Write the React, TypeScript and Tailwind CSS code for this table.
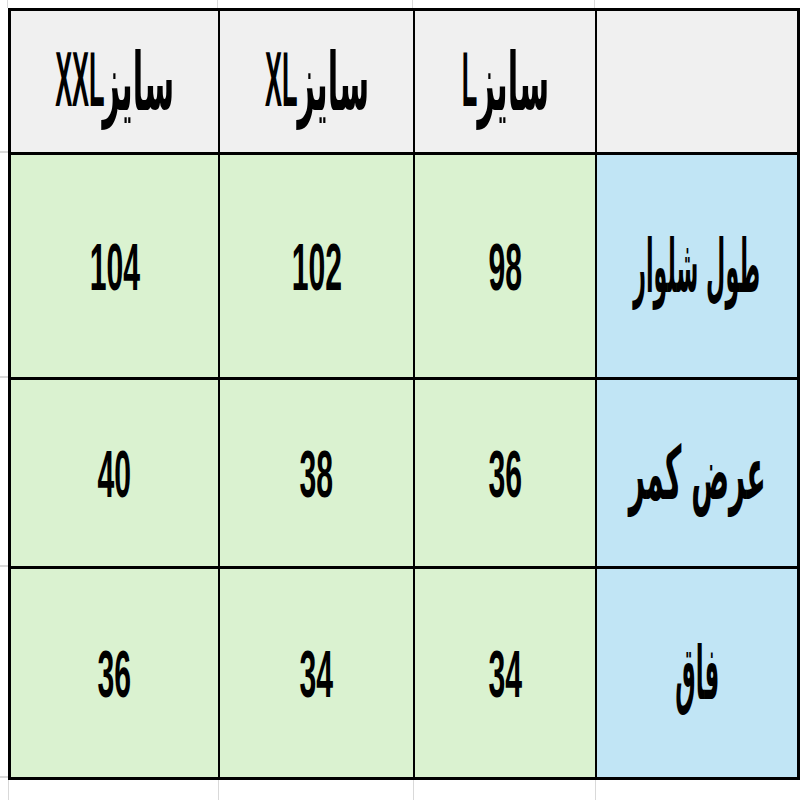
import React from "react";

const latin = "font-['Liberation_Sans',Arial,sans-serif] font-bold text-black leading-none";
const arabic = "font-['DejaVu_Sans','Noto_Sans',sans-serif] font-bold text-black leading-none";

function Num({ v }: { v: string }) {
  return (
    <span className={`${latin} inline-block text-[67px] scale-x-[0.45]`}>{v}</span>
  );
}

function HeadCell({ s, w }: { s: string; w: number }) {
  return (
    <div className="bg-[#f0f0f0] flex items-center justify-center">
      <div className="flex items-center">
        <div className="flex justify-center shrink-0" style={{ width: w }}>
          <span className={`${latin} shrink-0 whitespace-nowrap inline-block text-[77px] scale-x-[0.33] translate-y-[-2px]`}>
            {s}
          </span>
        </div>
        <div className="flex justify-center shrink-0 w-[70px]">
          <span dir="rtl" className={`${arabic} shrink-0 whitespace-nowrap inline-block text-[80px] scale-x-[0.38] translate-y-[1px]`}>
            سایز
          </span>
        </div>
      </div>
    </div>
  );
}

function Label({ t, w, sx }: { t: string; w: number; sx: string }) {
  return (
    <div className="bg-[#c1e5f5] flex items-center justify-center">
      <div className="flex justify-center shrink-0" style={{ width: w }}>
        <span dir="rtl" className={`${arabic} shrink-0 inline-block whitespace-nowrap text-[74px] ${sx}`}>{t}</span>
      </div>
    </div>
  );
}

function G({ v }: { v: string }) {
  return (
    <div className="bg-[#daf2d0] flex items-center justify-center">
      <Num v={v} />
    </div>
  );
}

export default function App() {
  return (
    <div className="w-[800px] h-[800px] bg-white relative overflow-hidden">
      <div className="h-[8px] grid grid-cols-[8px_210px_195px_182px_205px]">
        <div className="border-r border-[#d9d9d9]" />
        <div className="border-r border-[#d9d9d9]" />
        <div className="border-r border-[#d9d9d9]" />
        <div className="border-r border-[#d9d9d9]" />
        <div />
      </div>
      <div className="flex">
        <div className="w-[8px] flex flex-col">
          <div className="h-[145px] border-b-2 border-[#d9d9d9]" />
          <div className="h-[225px] border-b-2 border-[#d9d9d9]" />
          <div className="h-[189px] border-b-2 border-[#d9d9d9]" />
          <div className="h-[211px] border-b-2 border-[#d9d9d9]" />
        </div>
        <div className="w-[792px] bg-black p-[3px] grid grid-cols-[207px_193px_180px_200px] grid-rows-[141px_222px_186px_208px] gap-x-[2px] gap-y-[3px]">
          <HeadCell s="XXL" w={48} />
          <HeadCell s="XL" w={33} />
          <HeadCell s="L" w={17} />
          <div className="bg-[#f0f0f0]" />

          <G v="104" />
          <G v="102" />
          <G v="98" />
          <Label t="طول شلوار" w={140} sx="scale-x-[0.30]" />

          <G v="40" />
          <G v="38" />
          <G v="36" />
          <Label t="عرض کمر" w={134} sx="scale-x-[0.38]" />

          <G v="36" />
          <G v="34" />
          <G v="34" />
          <Label t="فاق" w={46} sx="scale-x-[0.31]" />
        </div>
      </div>
      <div className="h-[20px] grid grid-cols-[9px_210px_195px_182px_204px]">
        <div className="border-r border-[#d9d9d9]" />
        <div className="border-r border-[#d9d9d9]" />
        <div className="border-r border-[#d9d9d9]" />
        <div className="border-r border-[#d9d9d9]" />
        <div />
      </div>
    </div>
  );
}
